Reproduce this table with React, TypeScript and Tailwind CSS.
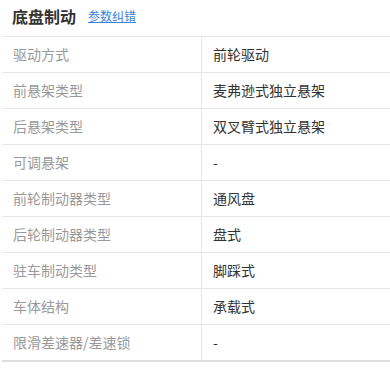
const rows: [string, string][] = [
  ["驱动方式", "前轮驱动"],
  ["前悬架类型", "麦弗逊式独立悬架"],
  ["后悬架类型", "双叉臂式独立悬架"],
  ["可调悬架", "-"],
  ["前轮制动器类型", "通风盘"],
  ["后轮制动器类型", "盘式"],
  ["驻车制动类型", "脚踩式"],
  ["车体结构", "承载式"],
  ["限滑差速器/差速锁", "-"],
];

export default function App() {
  return (
    <div
      className="min-h-[373px] w-[390px] bg-white"
      style={{ fontFamily: '"Noto Sans CJK SC", "Noto Sans", sans-serif' }}
    >
      <div className="flex h-[36px] items-center gap-3 pb-[4px] pl-[12px]">
        <h2 className="text-[16px] font-bold leading-none text-[#333]">底盘制动</h2>
        <a href="#" className="text-[12px] leading-none text-[#3b82d9] underline">
          参数纠错
        </a>
      </div>

      <div className="ml-[2px] border-t border-[#e6e6e6]">
        {rows.map(([label, value], i) => (
          <div
            key={label}
            className={
              i === rows.length - 1
                ? "grid h-[37px] grid-cols-[200px_1fr] border-b-2 border-[#dedede] text-[14px]"
                : "grid h-[36px] grid-cols-[200px_1fr] border-b border-[#e6e6e6] text-[14px]"
            }
          >
            <div className="flex items-center border-r border-[#e6e6e6] pl-[11px] text-[#999]">
              {label}
            </div>
            <div className="flex items-center pl-[11px] text-[#333]">{value}</div>
          </div>
        ))}
      </div>
    </div>
  );
}
